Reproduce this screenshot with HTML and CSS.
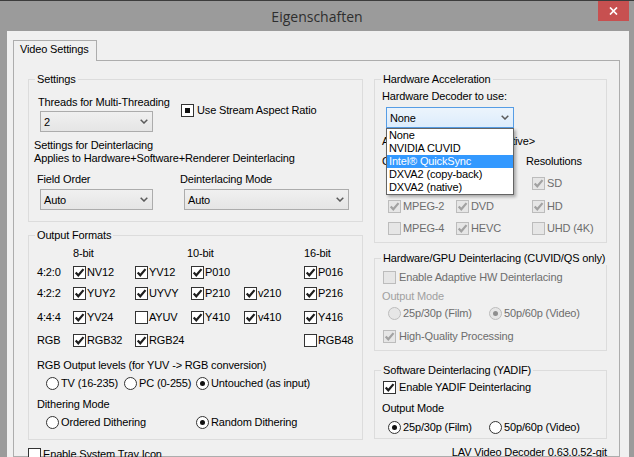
FILE: index.html
```html
<!DOCTYPE html>
<html lang="de">
<head>
<meta charset="utf-8">
<title>Eigenschaften</title>
<link rel="stylesheet" href="styles.css">
</head>
<body>
<div class="window">
  <header class="titlebar">
    <div></div>
    <div class="title">Eigenschaften</div>
    <div class="close"><svg width="9" height="8" viewBox="0 0 9 8"><path d="M1 0.5 L8 7.5 M8 0.5 L1 7.5" stroke="#fff" stroke-width="1.7"/></svg></div>
  </header>
  <div class="client">
    <div class="tabs"><div class="tab">Video Settings</div></div>
    <div class="page">
      <div class="col col-left">
        <fieldset class="group g-settings">
          <legend>Settings</legend>
          <div class="body">
            <div class="threads-row">
              <div class="threads">
                <div class="lbl">Threads for Multi-Threading</div>
                <div class="combo c-small"><span>2</span><svg class="chev" width="8" height="5" viewBox="0 0 8 5"><path d="M0.7 0.7 L4 4 L7.3 0.7" /></svg></div>
              </div>
              <label class="chk ratio"><span class="box"><span class="ind"></span></span><span>Use Stream Aspect Ratio</span></label>
            </div>
            <div class="para">Settings for Deinterlacing<br>Applies to Hardware+Software+Renderer Deinterlacing</div>
            <div class="deint-row">
              <div class="field-order">
                <div class="lbl">Field Order</div>
                <div class="combo c-small"><span>Auto</span><svg class="chev" width="8" height="5" viewBox="0 0 8 5"><path d="M0.7 0.7 L4 4 L7.3 0.7" /></svg></div>
              </div>
              <div class="deint-mode">
                <div class="lbl">Deinterlacing Mode</div>
                <div class="combo c-wide"><span>Auto</span><svg class="chev" width="8" height="5" viewBox="0 0 8 5"><path d="M0.7 0.7 L4 4 L7.3 0.7" /></svg></div>
              </div>
            </div>
          </div>
        </fieldset>

        <fieldset class="group g-output">
          <legend>Output Formats</legend>
          <div class="body">
            <div class="fmt-grid">
              <span></span><span class="hdr">8-bit</span><span></span><span class="hdr h10">10-bit</span><span></span><span class="hdr">16-bit</span>

              <span class="rl">4:2:0</span>
              <label class="chk"><span class="box"><svg viewBox="0 0 11 11"><path d="M1.7 5.4 L4.3 8.3 L9.5 2.1"/></svg></span><span>NV12</span></label>
              <label class="chk"><span class="box"><svg viewBox="0 0 11 11"><path d="M1.7 5.4 L4.3 8.3 L9.5 2.1"/></svg></span><span>YV12</span></label>
              <label class="chk"><span class="box"><svg viewBox="0 0 11 11"><path d="M1.7 5.4 L4.3 8.3 L9.5 2.1"/></svg></span><span>P010</span></label>
              <span></span>
              <label class="chk"><span class="box"><svg viewBox="0 0 11 11"><path d="M1.7 5.4 L4.3 8.3 L9.5 2.1"/></svg></span><span>P016</span></label>

              <span class="rl">4:2:2</span>
              <label class="chk"><span class="box"><svg viewBox="0 0 11 11"><path d="M1.7 5.4 L4.3 8.3 L9.5 2.1"/></svg></span><span>YUY2</span></label>
              <label class="chk"><span class="box"><svg viewBox="0 0 11 11"><path d="M1.7 5.4 L4.3 8.3 L9.5 2.1"/></svg></span><span>UYVY</span></label>
              <label class="chk"><span class="box"><svg viewBox="0 0 11 11"><path d="M1.7 5.4 L4.3 8.3 L9.5 2.1"/></svg></span><span>P210</span></label>
              <label class="chk"><span class="box"><svg viewBox="0 0 11 11"><path d="M1.7 5.4 L4.3 8.3 L9.5 2.1"/></svg></span><span>v210</span></label>
              <label class="chk"><span class="box"><svg viewBox="0 0 11 11"><path d="M1.7 5.4 L4.3 8.3 L9.5 2.1"/></svg></span><span>P216</span></label>

              <span class="rl">4:4:4</span>
              <label class="chk"><span class="box"><svg viewBox="0 0 11 11"><path d="M1.7 5.4 L4.3 8.3 L9.5 2.1"/></svg></span><span>YV24</span></label>
              <label class="chk"><span class="box"></span><span>AYUV</span></label>
              <label class="chk"><span class="box"><svg viewBox="0 0 11 11"><path d="M1.7 5.4 L4.3 8.3 L9.5 2.1"/></svg></span><span>Y410</span></label>
              <label class="chk"><span class="box"><svg viewBox="0 0 11 11"><path d="M1.7 5.4 L4.3 8.3 L9.5 2.1"/></svg></span><span>v410</span></label>
              <label class="chk"><span class="box"><svg viewBox="0 0 11 11"><path d="M1.7 5.4 L4.3 8.3 L9.5 2.1"/></svg></span><span>Y416</span></label>

              <span class="rl">RGB</span>
              <label class="chk"><span class="box"><svg viewBox="0 0 11 11"><path d="M1.7 5.4 L4.3 8.3 L9.5 2.1"/></svg></span><span>RGB32</span></label>
              <label class="chk"><span class="box"><svg viewBox="0 0 11 11"><path d="M1.7 5.4 L4.3 8.3 L9.5 2.1"/></svg></span><span>RGB24</span></label>
              <span></span>
              <span></span>
              <label class="chk"><span class="box"></span><span>RGB48</span></label>
            </div>

            <div class="lbl levels">RGB Output levels (for YUV -&gt; RGB conversion)</div>
            <div class="radios r-levels">
              <label class="radio w78"><span class="circle"></span><span>TV (16-235)</span></label>
              <label class="radio w72"><span class="circle"></span><span>PC (0-255)</span></label>
              <label class="radio"><span class="circle on"></span><span>Untouched (as input)</span></label>
            </div>
            <div class="lbl dither">Dithering Mode</div>
            <div class="radios r-dither">
              <label class="radio w150"><span class="circle"></span><span>Ordered Dithering</span></label>
              <label class="radio"><span class="circle on"></span><span>Random Dithering</span></label>
            </div>
          </div>
        </fieldset>

        <label class="chk tray"><span class="box"></span><span>Enable System Tray Icon</span></label>
      </div>

      <div class="col col-right">
        <fieldset class="group g-hw">
          <legend>Hardware Acceleration</legend>
          <div class="body">
            <div class="lbl">Hardware Decoder to use:</div>
            <div class="combo-wrap">
              <div class="combo focus"><span>None</span><svg class="chev" width="8" height="5" viewBox="0 0 8 5"><path d="M0.7 0.7 L4 4 L7.3 0.7" /></svg></div>
              <ul class="dropdown">
                <li>None</li>
                <li>NVIDIA CUVID</li>
                <li class="sel">Intel® QuickSync</li>
                <li>DXVA2 (copy-back)</li>
                <li>DXVA2 (native)</li>
              </ul>
            </div>
            <div class="lbl active-dec">Active Decoder: &lt;inactive&gt;</div>
            <div class="codec-head"><span class="ch-codecs">Codecs</span><span>Resolutions</span></div>
            <div class="codec-grid">
              <label class="chk dis"><span class="box"><svg viewBox="0 0 11 11"><path d="M1.7 5.4 L4.3 8.3 L9.5 2.1"/></svg></span><span>H.264</span></label>
              <label class="chk dis"><span class="box"><svg viewBox="0 0 11 11"><path d="M1.7 5.4 L4.3 8.3 L9.5 2.1"/></svg></span><span>VC-1</span></label>
              <label class="chk dis"><span class="box"><svg viewBox="0 0 11 11"><path d="M1.7 5.4 L4.3 8.3 L9.5 2.1"/></svg></span><span>SD</span></label>
              <label class="chk dis"><span class="box"><svg viewBox="0 0 11 11"><path d="M1.7 5.4 L4.3 8.3 L9.5 2.1"/></svg></span><span>MPEG-2</span></label>
              <label class="chk dis"><span class="box"><svg viewBox="0 0 11 11"><path d="M1.7 5.4 L4.3 8.3 L9.5 2.1"/></svg></span><span>DVD</span></label>
              <label class="chk dis"><span class="box"><svg viewBox="0 0 11 11"><path d="M1.7 5.4 L4.3 8.3 L9.5 2.1"/></svg></span><span>HD</span></label>
              <label class="chk dis"><span class="box"></span><span>MPEG-4</span></label>
              <label class="chk dis"><span class="box"><svg viewBox="0 0 11 11"><path d="M1.7 5.4 L4.3 8.3 L9.5 2.1"/></svg></span><span>HEVC</span></label>
              <label class="chk dis"><span class="box"></span><span>UHD (4K)</span></label>
            </div>
          </div>
        </fieldset>

        <fieldset class="group g-gpu">
          <legend>Hardware/GPU Deinterlacing (CUVID/QS only)</legend>
          <div class="body">
            <label class="chk dis"><span class="box"></span><span>Enable Adaptive HW Deinterlacing</span></label>
            <div class="lbl mode dis-static">Output Mode</div>
            <div class="radios r-mode">
              <label class="radio dis w101"><span class="circle"></span><span>25p/30p (Film)</span></label>
              <label class="radio dis"><span class="circle on"></span><span>50p/60p (Video)</span></label>
            </div>
            <label class="chk dis hq"><span class="box"><svg viewBox="0 0 11 11"><path d="M1.7 5.4 L4.3 8.3 L9.5 2.1"/></svg></span><span>High-Quality Processing</span></label>
          </div>
        </fieldset>

        <fieldset class="group g-sw">
          <legend>Software Deinterlacing (YADIF)</legend>
          <div class="body">
            <label class="chk"><span class="box"><svg viewBox="0 0 11 11"><path d="M1.7 5.4 L4.3 8.3 L9.5 2.1"/></svg></span><span>Enable YADIF Deinterlacing</span></label>
            <div class="lbl mode">Output Mode</div>
            <div class="radios r-mode">
              <label class="radio w101"><span class="circle on"></span><span>25p/30p (Film)</span></label>
              <label class="radio"><span class="circle"></span><span>50p/60p (Video)</span></label>
            </div>
          </div>
        </fieldset>

        <div class="version">LAV Video Decoder 0.63.0.52-git</div>
      </div>
    </div>
  </div>
</div>
</body>
</html>
```

FILE: styles.css
```css
* { box-sizing: border-box; }
html, body { margin: 0; padding: 0; }
body {
  width: 634px;
  height: 457px;
  overflow: hidden;
  background: #9b9b9b;
  font-family: "Liberation Sans", Arial, sans-serif;
  font-size: 11px;
  line-height: 14px;
  letter-spacing: -0.15px;
  color: #000;
}

.window {
  height: 457px;
  display: flex;
  flex-direction: column;
  border-top: 1px solid #3c3c3c;
}

.titlebar {
  flex: none;
  height: 30px;
  display: grid;
  grid-template-columns: 1fr auto 1fr;
}
.title {
  font-family: "Open Sans", "Noto Sans", sans-serif;
  font-size: 14px;
  letter-spacing: 0;
  line-height: 30px;
  padding-top: 1px;
  color: #2e2e2e;
}
.close {
  justify-self: end;
  width: 31px;
  height: 20px;
  margin-right: 5px;
  background: #c75050;
  display: flex;
  align-items: center;
  justify-content: center;
}

.client {
  flex: 1;
  min-height: 0;
  margin: 0 5px 0 7px;
  background: #f0f0f0;
  padding: 9px 9px 0 6px;
  display: flex;
  flex-direction: column;
}

.tabs { flex: none; display: flex; }
.tab {
  width: 84px;
  height: 21px;
  border: 1px solid #adadad;
  border-bottom: none;
  padding: 1px 0 0 6px;
  background: #f0f0f0;
  margin-bottom: -1px;
  position: relative;
  z-index: 1;
}

.page {
  flex: 1;
  min-height: 0;
  border: 1px solid #adadad;
  padding: 11px 12px 0 14px;
  display: flex;
  gap: 11px;
}
.col { flex: none; display: flex; flex-direction: column; }
.col-left { width: 335px; }
.col-right { width: 233px; }

.group {
  margin: 0;
  padding: 0;
  min-width: 0;
  border: 1px solid #dcdcdc;
}
legend {
  padding: 0 2px;
  margin-left: 6px;
  line-height: 14px;
  white-space: nowrap;
}

/* combo boxes */
.combo {
  height: 21px;
  border: 1px solid #acacac;
  background: linear-gradient(#f0f0f0, #e5e5e5);
  display: flex;
  align-items: center;
  justify-content: space-between;
  padding: 0 4px 0 3px;
}
.chev path { fill: none; stroke: #5a5a5a; stroke-width: 1.5; }
.c-small { width: 113px; }
.c-wide { width: 165px; }
.combo.focus {
  border-color: #569de5;
  background: linear-gradient(#ecf4fc, #dcecfc);
}

/* checkboxes */
.chk { display: flex; align-items: center; height: 14px; gap: 2px; white-space: nowrap; }
.box {
  flex: none;
  width: 13px;
  height: 13px;
  border: 1px solid #333;
  background: #fff;
  display: flex;
  align-items: center;
  justify-content: center;
}
.box svg { width: 11px; height: 11px; }
.box path { fill: none; stroke: #1e1e1e; stroke-width: 2.2; }
.box .ind { width: 5px; height: 5px; background: #111; }
.chk.dis { color: #6d6d6d; }
.chk.dis .box { border-color: #bcbcbc; background: #e6e6e6; }
.chk.dis .box path { stroke: #a2a2a2; }

/* radios */
.radios { display: flex; }
.radio { display: flex; align-items: center; height: 14px; gap: 2px; white-space: nowrap; }
.circle {
  flex: none;
  width: 13px;
  height: 13px;
  border: 1px solid #333;
  border-radius: 50%;
  background: #fff;
  display: flex;
  align-items: center;
  justify-content: center;
}
.circle.on::after {
  content: "";
  width: 5px;
  height: 5px;
  border-radius: 50%;
  background: #111;
}
.radio.dis { color: #6d6d6d; }
.radio.dis .circle { border-color: #bcbcbc; background: #e6e6e6; }
.radio.dis .circle.on::after { background: #8e8e8e; }
.w78 { width: 78px; }
.w72 { width: 72px; }
.w150 { width: 150px; }
.w101 { width: 101px; }

/* Settings group */
.g-settings .body { padding: 9px 0 11px 5px; }
.threads-row { display: flex; }
.threads { width: 143px; margin-left: 4px; }
.threads .combo { margin-left: 2px; margin-top: 2px; }
.ratio { margin-top: 8px; gap: 3px; }
.para { margin-top: 7px; line-height: 13px; }
.deint-row { display: flex; margin-top: 7px; }
.field-order { width: 143px; margin-left: 3px; }
.field-order .combo { margin-left: 3px; margin-top: 3px; }
.deint-mode .combo { margin-left: 4px; margin-top: 3px; }

/* Output formats */
.group.g-output { margin-top: 6px; }
.g-output .body { padding: 4px 0 10px 8px; }
.fmt-grid {
  display: grid;
  grid-template-columns: 36px 62px 56px 53px 60px auto;
  grid-template-rows: 19px 21px 24px 23px 14px;
  align-items: start;
}
.fmt-grid > span { height: 14px; }
.fmt-grid .chk { gap: 1px; }
.h10 { margin-left: -4px; }
.levels { margin-top: 11px; }
.r-levels { margin-top: 4px; margin-left: 9px; }
.dither { margin-top: 7px; }
.r-dither { margin-top: 4px; margin-left: 9px; }
.tray { margin-top: 7px; }

/* Hardware acceleration */
.g-hw .body { padding: 3px 0 7px 7px; }
.combo-wrap { position: relative; width: 128px; margin: 4px 0 0 4px; }
.combo-wrap .combo { width: 128px; }
.dropdown {
  position: absolute;
  top: 21px;
  left: 0;
  width: 128px;
  margin: 0;
  padding: 0;
  list-style: none;
  background: #fff;
  border: 1px solid #646464;
  box-shadow: 2px 2px 3px rgba(0, 0, 0, 0.3);
  z-index: 5;
}
.dropdown li { height: 13px; line-height: 13px; padding-left: 2px; }
.dropdown li.sel { background: #3399ff; color: #fff; }
.active-dec { margin-top: 6px; word-spacing: 13px; white-space: nowrap; }
.codec-head { display: flex; margin-top: 6px; }
.ch-codecs { width: 144px; }
.codec-grid {
  display: grid;
  grid-template-columns: 68px 76px auto;
  grid-template-rows: 23px 22px 14px;
  align-items: start;
  margin: 8px 0 0 6px;
}

/* GPU deinterlacing */
.group.g-gpu { margin-top: 8px; }
.g-gpu .body { padding: 5px 0 7px 8px; }
.g-gpu .mode { margin-top: 5px; margin-left: -1px; }
.dis-static { color: #a0a0a0; }
.g-gpu .r-mode { margin-top: 3px; margin-left: 5px; }
.hq { margin-top: 9px; }
.g-gpu .chk, .g-sw .chk { gap: 3px; }

/* Software deinterlacing */
.group.g-sw { margin-top: 12px; }
.g-sw .body { padding: 3px 0 4px 8px; }
.g-sw .mode { margin-top: 7px; margin-left: -1px; }
.g-sw .r-mode { margin-top: 5px; margin-left: 5px; }

.version { margin-top: 6px; text-align: right; }
```
